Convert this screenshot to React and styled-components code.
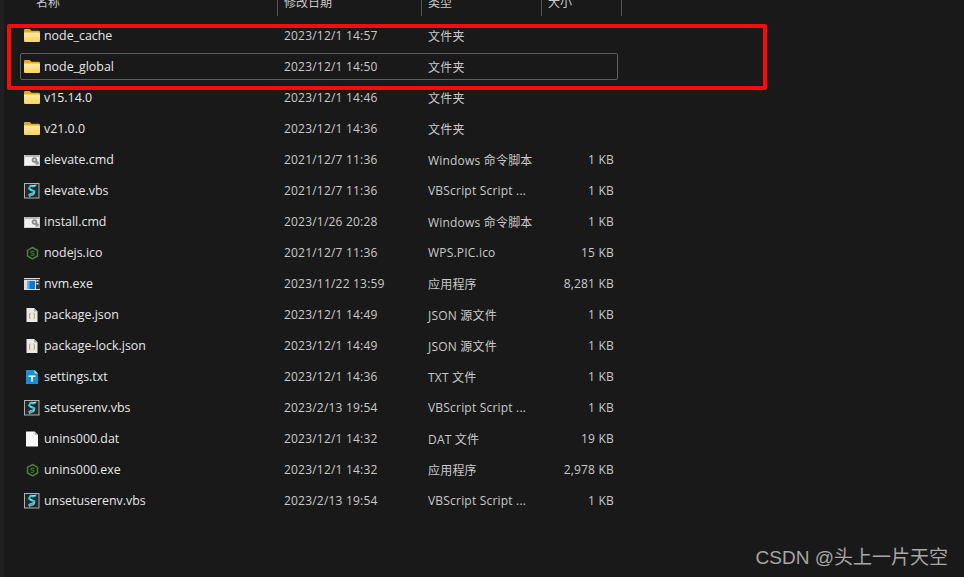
import React from 'react';
import styled, { createGlobalStyle } from 'styled-components';

const Global = createGlobalStyle`
  html, body { margin: 0; padding: 0; background: #191919; }
  body { width: 964px; height: 577px; overflow: hidden; }
`;

const FONT = `"Open Sans", "Noto Sans", "Noto Sans CJK SC", sans-serif`;

const Window = styled.div`
  position: relative;
  width: 964px;
  height: 577px;
  overflow: hidden;
  background: #191919;
  border-left: 4px solid #202020;
  box-sizing: border-box;
  font-family: ${FONT};
  font-size: 12px;
  color: #dcdcdc;
`;

const Header = styled.div`
  display: grid;
  grid-template-columns: 274px 144px 120px 80px;
  height: 16px;
  margin-bottom: 6px;
`;

const HeaderCell = styled.div`
  border-right: 1px solid #5a5a5a;
  box-sizing: border-box;
  padding-left: ${p => p.$pad}px;
  margin-top: -10px;
  height: 26px;
  line-height: 25px;
  color: #c8c8c8;
  overflow: hidden;
`;

const List = styled.div`
  display: flex;
  flex-direction: column;
  padding: 0 0 0 16px;
`;

const Row = styled.div`
  display: grid;
  grid-template-columns: 258px 144px 120px 71px;
  align-items: center;
  width: 598px;
  height: 27px;
  margin-bottom: 4px;
  box-sizing: border-box;
  border: 1px solid ${p => (p.$focused ? '#5e5e5e' : 'transparent')};
  border-radius: 2px;
`;

const NameCell = styled.div`
  display: flex;
  align-items: center;
  gap: 4px;
  padding-left: 3px;
  white-space: nowrap;
  font-size: 12.4px;
  color: #e6e6e6;
`;

const IconBox = styled.span`
  width: 16px;
  height: 16px;
  flex: none;
  display: block;
  svg { display: block; }
`;

const Cell = styled.div`
  white-space: nowrap;
  color: #c9c9c9;
  padding-left: 5px;
  letter-spacing: 0.2px;
`;

const SizeCell = styled(Cell)`
  padding-left: 0;
  text-align: right;
`;

const Highlight = styled.div`
  position: absolute;
  left: 3px;
  top: 24px;
  width: 760px;
  height: 66px;
  box-sizing: border-box;
  border: 4px solid #fb0a0a;
  border-radius: 2px;
  pointer-events: none;
`;

const Watermark = styled.div`
  position: absolute;
  right: 16px;
  bottom: 8px;
  font-family: "Liberation Sans", "Noto Sans CJK SC", sans-serif;
  font-size: 19px;
  color: #a6a6a6;
  white-space: nowrap;
`;

const Folder = () => (
  <svg width="16" height="16" viewBox="0 0 16 16">
    <defs>
      <linearGradient id="folderFront" x1="0" y1="0" x2="0" y2="1">
        <stop offset="0" stopColor="#ffeaa6" />
        <stop offset="1" stopColor="#fbd163" />
      </linearGradient>
    </defs>
    <path d="M0 2.2Q0 1 1.2 1H5.5L7.5 2.8H14.8Q16 2.8 16 4V7H0Z" fill="#eaa91f" />
    <path d="M0 4.6H14.8Q16 4.6 16 5.8V13Q16 14 15 14H1Q0 14 0 13Z" fill="url(#folderFront)" />
  </svg>
);

const Cmd = () => (
  <svg width="16" height="16" viewBox="0 0 16 16">
    <rect x="0" y="3" width="16" height="11" fill="#cfcfcf" />
    <rect x="1" y="5" width="14" height="8" fill="#f0f0f0" />
    <rect x="1" y="3.5" width="14" height="1" fill="#9a9a9a" />
    <circle cx="10.5" cy="8" r="2.8" fill="#8d8d8d" />
    <circle cx="10.5" cy="8" r="1" fill="#e4e4e4" />
    <circle cx="13" cy="11" r="1.8" fill="#7d7d7d" />
    <circle cx="13" cy="11" r="0.6" fill="#e4e4e4" />
  </svg>
);

const Vbs = () => (
  <svg width="16" height="16" viewBox="0 0 16 16">
    <rect x="0.5" y="0.5" width="14.5" height="14.5" fill="#20282c" stroke="#b0b0b0" />
    <path d="M11.5 2.5L9 3.5L6.5 2.8L5 5.5L7 7.2L10 8L9 10.5L6.5 11L4.5 12.5" fill="none" stroke="#34cbd6" strokeWidth="1.9" />
    <path d="M12.5 2L9.8 2.6L7.5 2.2M6 6L8.5 7M11 8.5L10 11.5L7.5 12.5L5 13.5" fill="none" stroke="#e2e2e2" strokeWidth="0.8" />
  </svg>
);

const Node = () => (
  <svg width="16" height="16" viewBox="0 0 16 16">
    <path d="M8.5 2.5L13.5 5.4V11L8.5 13.9L3.5 11V5.4Z" fill="none" stroke="#4c8138" strokeWidth="1.5" />
    <path d="M10.4 6.6Q8.5 5.6 7 6.6Q6.4 8 8.5 8.3Q10.6 8.7 9.8 10Q8.2 10.8 6.6 10" fill="none" stroke="#427231" strokeWidth="1.1" />
  </svg>
);

const Exe = () => (
  <svg width="16" height="16" viewBox="0 0 16 16">
    <rect x="0" y="2" width="16" height="12" fill="#dedede" />
    <rect x="3" y="5" width="8" height="8" fill="#0a78d0" />
    <rect x="3" y="5" width="2.5" height="8" fill="#55b6f2" />
    <rect x="12" y="3" width="4" height="10" fill="#3a3a3a" />
    <rect x="0" y="3" width="12" height="1" fill="#555" />
    <rect x="12.5" y="4" width="2" height="1.5" fill="#eee" />
    <rect x="12.5" y="7" width="2" height="1.5" fill="#eee" />
  </svg>
);

const Json = () => (
  <svg width="16" height="16" viewBox="0 0 16 16">
    <path d="M2.5 1H10L13.5 4.5V15H2.5Z" fill="#e9e9e9" />
    <path d="M10 1V4.5H13.5Z" fill="#b0b0b0" />
    <path d="M6.6 6Q5.6 6 5.6 7.2V10.4Q5.6 11.5 6.6 11.5" fill="none" stroke="#b8b25a" strokeWidth="1.1" />
    <path d="M9.4 6Q10.4 6 10.4 7.2V10.4Q10.4 11.5 9.4 11.5" fill="none" stroke="#b8b25a" strokeWidth="1.1" />
  </svg>
);

const Txt = () => (
  <svg width="16" height="16" viewBox="0 0 16 16">
    <path d="M2 1H10.5L14 4.5V15H2Z" fill="#1690dc" />
    <path d="M10.5 1L14 4.5H10.5Z" fill="#f4d27a" />
    <path d="M4.5 6.5H11.5V8H8.8V12.5H7.2V8H4.5Z" fill="#fff" />
  </svg>
);

const Blank = () => (
  <svg width="16" height="16" viewBox="0 0 16 16">
    <path d="M2 0.5H10.5L14 4V15.5H2Z" fill="#f8f8f8" />
    <path d="M10.5 0.5V4H14Z" fill="#bcbcbc" />
  </svg>
);

const files = [
  { name: 'node_cache', date: '2023/12/1 14:57', type: '文件夹', size: '', Icon: Folder },
  { name: 'node_global', date: '2023/12/1 14:50', type: '文件夹', size: '', Icon: Folder, focused: true },
  { name: 'v15.14.0', date: '2023/12/1 14:46', type: '文件夹', size: '', Icon: Folder },
  { name: 'v21.0.0', date: '2023/12/1 14:36', type: '文件夹', size: '', Icon: Folder },
  { name: 'elevate.cmd', date: '2021/12/7 11:36', type: 'Windows 命令脚本', size: '1 KB', Icon: Cmd },
  { name: 'elevate.vbs', date: '2021/12/7 11:36', type: 'VBScript Script ...', size: '1 KB', Icon: Vbs },
  { name: 'install.cmd', date: '2023/1/26 20:28', type: 'Windows 命令脚本', size: '1 KB', Icon: Cmd },
  { name: 'nodejs.ico', date: '2021/12/7 11:36', type: 'WPS.PIC.ico', size: '15 KB', Icon: Node },
  { name: 'nvm.exe', date: '2023/11/22 13:59', type: '应用程序', size: '8,281 KB', Icon: Exe },
  { name: 'package.json', date: '2023/12/1 14:49', type: 'JSON 源文件', size: '1 KB', Icon: Json },
  { name: 'package-lock.json', date: '2023/12/1 14:49', type: 'JSON 源文件', size: '1 KB', Icon: Json },
  { name: 'settings.txt', date: '2023/12/1 14:36', type: 'TXT 文件', size: '1 KB', Icon: Txt },
  { name: 'setuserenv.vbs', date: '2023/2/13 19:54', type: 'VBScript Script ...', size: '1 KB', Icon: Vbs },
  { name: 'unins000.dat', date: '2023/12/1 14:32', type: 'DAT 文件', size: '19 KB', Icon: Blank },
  { name: 'unins000.exe', date: '2023/12/1 14:32', type: '应用程序', size: '2,978 KB', Icon: Node },
  { name: 'unsetuserenv.vbs', date: '2023/2/13 19:54', type: 'VBScript Script ...', size: '1 KB', Icon: Vbs },
];

export default function App() {
  return (
    <Window>
      <Global />
      <Header>
        <HeaderCell $pad={32}>名称</HeaderCell>
        <HeaderCell $pad={6}>修改日期</HeaderCell>
        <HeaderCell $pad={6}>类型</HeaderCell>
        <HeaderCell $pad={6}>大小</HeaderCell>
      </Header>
      <List>
        {files.map(({ name, date, type, size, Icon, focused }) => (
          <Row key={name} $focused={focused}>
            <NameCell><IconBox><Icon /></IconBox>{name}</NameCell>
            <Cell>{date}</Cell>
            <Cell>{type}</Cell>
            <SizeCell>{size}</SizeCell>
          </Row>
        ))}
      </List>
      <Highlight />
      <Watermark>CSDN @头上一片天空</Watermark>
    </Window>
  );
}
